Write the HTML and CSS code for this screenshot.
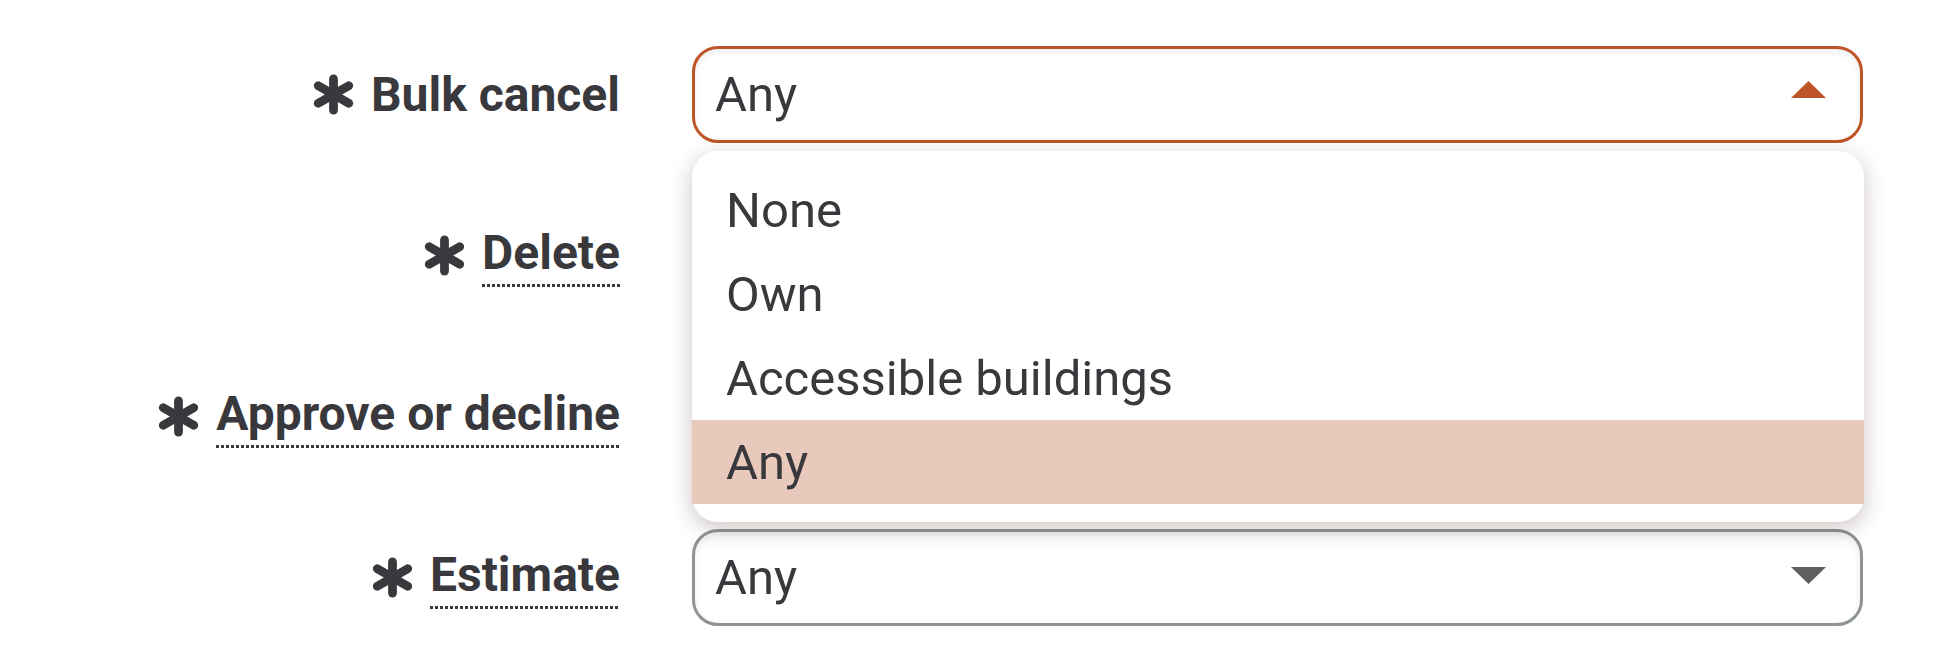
FILE: index.html
```html
<!DOCTYPE html>
<html lang="en">

<head>
    <meta charset="UTF-8">
    <meta name="viewport" content="width=device-width, initial-scale=1.0">
    <title>Permissions</title>
    <link rel="stylesheet" href="styles.css">
</head>

<body>
    <form class="perm-form">
        <!-- bulk cancel (open) -->
        <label class="field-label">
            <svg class="req" viewBox="0 0 42 42"><g stroke="currentColor" stroke-width="9" stroke-linecap="round"><line x1="21" y1="5" x2="21" y2="37"/><line x1="5.4" y1="12" x2="36.6" y2="30"/><line x1="5.4" y1="30" x2="36.6" y2="12"/></g></svg>
            <span>Bulk cancel</span>
        </label>
        <div class="select-wrap">
            <div class="select open">
                <span>Any</span>
                <svg class="arrow up" viewBox="0 0 35 17"><polygon points="0,17 17.5,0 35,17"/></svg>
            </div>
            <ul class="menu">
                <li>None</li>
                <li>Own</li>
                <li>Accessible buildings</li>
                <li class="active">Any</li>
            </ul>
        </div>

        <label class="field-label">
            <svg class="req" viewBox="0 0 42 42"><g stroke="currentColor" stroke-width="9" stroke-linecap="round"><line x1="21" y1="5" x2="21" y2="37"/><line x1="5.4" y1="12" x2="36.6" y2="30"/><line x1="5.4" y1="30" x2="36.6" y2="12"/></g></svg>
            <span class="hint">Delete</span>
        </label>
        <div class="select-wrap">
            <div class="select covered">
                <span>Any</span>
                <svg class="arrow down" viewBox="0 0 35 17"><polygon points="0,0 35,0 17.5,17"/></svg>
            </div>
        </div>

        <label class="field-label">
            <svg class="req" viewBox="0 0 42 42"><g stroke="currentColor" stroke-width="9" stroke-linecap="round"><line x1="21" y1="5" x2="21" y2="37"/><line x1="5.4" y1="12" x2="36.6" y2="30"/><line x1="5.4" y1="30" x2="36.6" y2="12"/></g></svg>
            <span class="hint">Approve or decline</span>
        </label>
        <div class="select-wrap">
            <div class="select covered">
                <span>Any</span>
                <svg class="arrow down" viewBox="0 0 35 17"><polygon points="0,0 35,0 17.5,17"/></svg>
            </div>
        </div>

        <label class="field-label">
            <svg class="req" viewBox="0 0 42 42"><g stroke="currentColor" stroke-width="9" stroke-linecap="round"><line x1="21" y1="5" x2="21" y2="37"/><line x1="5.4" y1="12" x2="36.6" y2="30"/><line x1="5.4" y1="30" x2="36.6" y2="12"/></g></svg>
            <span class="hint">Estimate</span>
        </label>
        <div class="select-wrap">
            <div class="select">
                <span>Any</span>
                <svg class="arrow down" viewBox="0 0 35 17"><polygon points="0,0 35,0 17.5,17"/></svg>
            </div>
        </div>
    </form>
</body>

</html>
```

FILE: styles.css
```css
body {
    margin: 0;
    background-color: #fff;
    font-family: Roboto, "Liberation Sans", sans-serif;
    color: #38383d;
}

.perm-form {
    display: grid;
    grid-template-columns: 620px 1171px;
    column-gap: 72px;
    row-gap: 64px;
    padding-top: 46px;
}

.field-label {
    display: flex;
    align-items: center;
    justify-content: flex-end;
    gap: 17px;
    font-size: 48px;
    font-weight: bold;
}

.req {
    width: 41px;
    height: 41px;
    flex-shrink: 0;
}

/* dotted underline that doesn't push the text up */
.hint {
    padding-bottom: 6px;
    background: repeating-linear-gradient(to right, #38383d 0 3px, transparent 3px 5px) left bottom / 100% 3px no-repeat;
}

.select-wrap {
    position: relative;
}

.select {
    box-sizing: border-box;
    height: 97px;
    display: flex;
    align-items: center;
    justify-content: space-between;
    padding: 0 34px 0 20px;
    border: 3px solid #8e9396;
    border-radius: 26px;
    box-shadow: inset 0 3px 8px rgba(0, 0, 0, 0.07);
    font-size: 49px;
}

/* selects sitting under the open menu */
.select.covered span {
    visibility: hidden;
}

.select.open {
    border-color: #bf5429;
}

.arrow {
    width: 35px;
    height: 17px;
}
.arrow.up {
    fill: #bf5429;
    margin-top: -10px;
}
.arrow.down {
    fill: #5f5f5f;
    margin-top: -5px;
}

.menu {
    position: absolute;
    z-index: 2;
    top: calc(100% + 8px);
    left: 0;
    right: -1px;
    margin: 0;
    padding: 17px 0 18px;
    list-style: none;
    background-color: #fff;
    border-radius: 26px;
    box-shadow: 0 6px 22px rgba(70, 45, 35, 0.28);
    font-size: 49px;
}

.menu li {
    height: 84px;
    display: flex;
    align-items: center;
    padding-left: 34px;
}

.menu li.active {
    background-color: #e9c9bb;
}
```
